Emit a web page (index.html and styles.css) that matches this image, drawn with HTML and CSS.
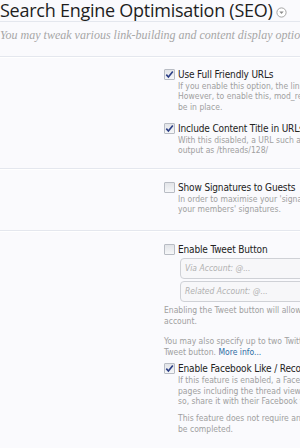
FILE: index.html
```html
<!DOCTYPE html>
<html>
<head>
<meta charset="utf-8">
<link rel="stylesheet" href="styles.css">
</head>
<body>
<div class="page">
  <div class="header">
    <h1 class="title">Search Engine Optimisation (SEO)<span class="toggle"><svg width="11" height="11" viewBox="0 0 11 11"><circle cx="5.5" cy="5.5" r="4.6" fill="#fff" stroke="#9a9a9a" stroke-width="0.9"/><path d="M3.3 4.4 L7.7 4.4 L5.5 7 Z" fill="#8a8a8a"/></svg></span></h1>
    <p class="subtitle">You may tweak various link-building and content display options here.</p>
  </div>

  <div class="section s1">
    <div class="row">
      <span class="cb on"><svg width="11" height="11" viewBox="0 0 11 11"><path d="M2.3 5.6 L4.4 8 L8.8 2.4" fill="none" stroke="#2c3f86" stroke-width="1.6"/></svg></span>
      <div class="body">
        <div class="label">Use Full Friendly URLs</div>
        <div class="desc">If you enable this option, the links generated by the software will not include "index.php?".<br>However, to enable this, mod_rewrite or an equivalent must be available and the correct rules need to<br>be in place.</div>
      </div>
    </div>
    <div class="row r2">
      <span class="cb on"><svg width="11" height="11" viewBox="0 0 11 11"><path d="M2.3 5.6 L4.4 8 L8.8 2.4" fill="none" stroke="#2c3f86" stroke-width="1.6"/></svg></span>
      <div class="body">
        <div class="label">Include Content Title in URLs</div>
        <div class="desc">With this disabled, a URL such as /threads/some-thread.128/ would be<br>output as /threads/128/</div>
      </div>
    </div>
  </div>

  <div class="section s2">
    <div class="row">
      <span class="cb"></span>
      <div class="body">
        <div class="label">Show Signatures to Guests</div>
        <div class="desc">In order to maximise your 'signature' search engine presence, show guests<br>your members' signatures.</div>
      </div>
    </div>
  </div>

  <div class="section s3">
    <div class="row">
      <span class="cb"></span>
      <div class="body">
        <div class="label">Enable Tweet Button</div>
      </div>
    </div>
    <div class="inputs">
      <div class="input">Via Account: @...</div>
      <div class="input">Related Account: @...</div>
    </div>
    <div class="note">Enabling the Tweet button will allow visitors to share your threads with their Twitter<br>account.</div>
    <div class="note n2">You may also specify up to two Twitter accounts to be recommended after using the<br>Tweet button. <a href="#" class="link">More info...</a></div>
    <div class="row r3">
      <span class="cb on"><svg width="11" height="11" viewBox="0 0 11 11"><path d="M2.3 5.6 L4.4 8 L8.8 2.4" fill="none" stroke="#2c3f86" stroke-width="1.6"/></svg></span>
      <div class="body">
        <div class="label">Enable Facebook Like / Recommend Button</div>
        <div class="desc">If this feature is enabled, a Facebook Like button will be shown on<br>pages including the thread view, allowing visitors to like your content and, in doing<br>so, share it with their Facebook friends.</div>
        <div class="desc d2">This feature does not require any Facebook setup or configuration to<br>be completed.</div>
      </div>
    </div>
  </div>
</div>
</body>
</html>
```

FILE: styles.css
```css
html, body {
  margin: 0;
  padding: 0;
  background: #fafafd;
}
.page {
  width: 300px;
  overflow: hidden;
  white-space: nowrap;
  font-family: "DejaVu Sans Condensed", "DejaVu Sans", sans-serif;
}
.header {
  border-bottom: 1px solid #e4e7ee;
}
.title {
  margin: 0;
  font-family: "Open Sans", sans-serif;
  font-weight: 400;
  font-size: 18px;
  line-height: 21px;
  height: 21px;
  color: #1e1e1e;
  letter-spacing: -0.25px;
  border-bottom: 1px solid #e4e7ee;
  display: flex;
  align-items: center;
}
.toggle {
  display: inline-flex;
  margin-left: 3px;
  margin-top: 3px;
}
.subtitle {
  margin: 0;
  height: 34px;
  padding-top: 6px;
  box-sizing: border-box;
  font-family: "Liberation Serif", serif;
  font-style: italic;
  font-size: 12px;
  color: #a6a6a6;
}
.section {
  border-top: 1px solid #fff;
  border-bottom: 1px solid #e4e7ee;
  padding-left: 164px;
}
.s1 { height: 112px; padding-top: 10px; box-sizing: border-box; }
.s2 { height: 62px; padding-top: 11px; box-sizing: border-box; }
.s3 { padding-top: 11px; height: 220px; box-sizing: border-box; border-bottom: none; }
.row {
  display: flex;
  align-items: flex-start;
}
.r2 { margin-top: 10px; }
.r3 { margin-top: 5px; }
.cb {
  flex: none;
  width: 11px;
  height: 11px;
  box-sizing: border-box;
  border: 1px solid #b8bcc4;
  background: linear-gradient(#e2e4e8, #f6f7f9);
  margin-top: 1px;
  margin-right: 3px;
  display: flex;
  align-items: center;
  justify-content: center;
  border-radius: 1px;
}
.cb svg { display: block; margin: -1px; }
.label {
  font-size: 10px;
  line-height: 13px;
  color: #222;
  letter-spacing: -0.15px;
}
.desc {
  font-size: 8.5px;
  line-height: 10.3px;
  color: #a0a0a0;
}
.d2 { margin-top: 7px; }
.inputs {
  margin-left: 16px;
  margin-top: 2px;
}
.input {
  height: 21px;
  box-sizing: border-box;
  border: 1px solid #cfd1d6;
  border-radius: 4px;
  background: #f7f7f9;
  margin-bottom: 2px;
  padding-left: 4px;
  font-size: 8.5px;
  line-height: 19px;
  font-style: italic;
  color: #b0b0b0;
  width: 160px;
}
.note {
  font-size: 8.5px;
  line-height: 10.6px;
  color: #a0a0a0;
  margin-top: 3px;
}
.n2 { margin-top: 10px; }
.link { color: #2e6da4; text-decoration: none; }
```
